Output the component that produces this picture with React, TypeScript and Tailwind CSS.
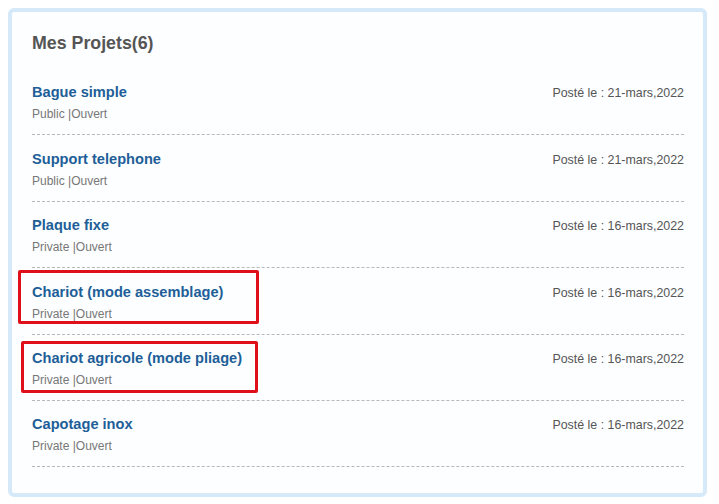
const PROJECTS = [
  { name: "Bague simple", visibility: "Public", status: "Ouvert", date: "21-mars,2022" },
  { name: "Support telephone", visibility: "Public", status: "Ouvert", date: "21-mars,2022" },
  { name: "Plaque fixe", visibility: "Private", status: "Ouvert", date: "16-mars,2022" },
  { name: "Chariot (mode assemblage)", visibility: "Private", status: "Ouvert", date: "16-mars,2022" },
  { name: "Chariot agricole (mode pliage)", visibility: "Private", status: "Ouvert", date: "16-mars,2022" },
  { name: "Capotage inox", visibility: "Private", status: "Ouvert", date: "16-mars,2022" },
];

function ProjectRow({ p }: { p: (typeof PROJECTS)[number] }) {
  return (
    <div className="pt-[13.4px] pb-[12px] border-b border-dashed border-[#b8b8b8]">
      <div className="flex items-start justify-between h-[20px]">
        <a href="#" className="text-[14.6px] leading-[20px] font-bold text-[#215e98]">
          {p.name}
        </a>
        <span className="text-[12.4px] leading-[20px] text-[#555] pt-[1px]">Posté le : {p.date}</span>
      </div>
      <div className="mt-[4px] text-[12px] leading-[16px] text-[#777]">
        {p.visibility} |{p.status}
      </div>
    </div>
  );
}

export default function App() {
  return (
    <div
      className="relative w-[719px] h-[504px] bg-white pt-[8px] pl-[8px]"
      style={{ fontFamily: '"Liberation Sans", Arial, sans-serif' }}
    >
      <div className="w-[699px] h-[489px] rounded-[6px] border-4 border-[#d6e9f8] bg-[#fdfeff] pt-[19px] pl-[20px] pr-[19px]">
        <h2 className="text-[17.8px] leading-[24px] font-bold text-[#555] mb-[14px]">Mes Projets(6)</h2>
        {PROJECTS.map((p) => (
          <ProjectRow key={p.name} p={p} />
        ))}
      </div>

      {/* annotation boxes */}
      <div className="absolute left-[18px] top-[270px] w-[241px] h-[54px] border-[3px] border-[#e0101a] rounded-[2px]" />
      <div className="absolute left-[21px] top-[341px] w-[237px] h-[52px] border-[3px] border-[#e0101a] rounded-[2px]" />
    </div>
  );
}
